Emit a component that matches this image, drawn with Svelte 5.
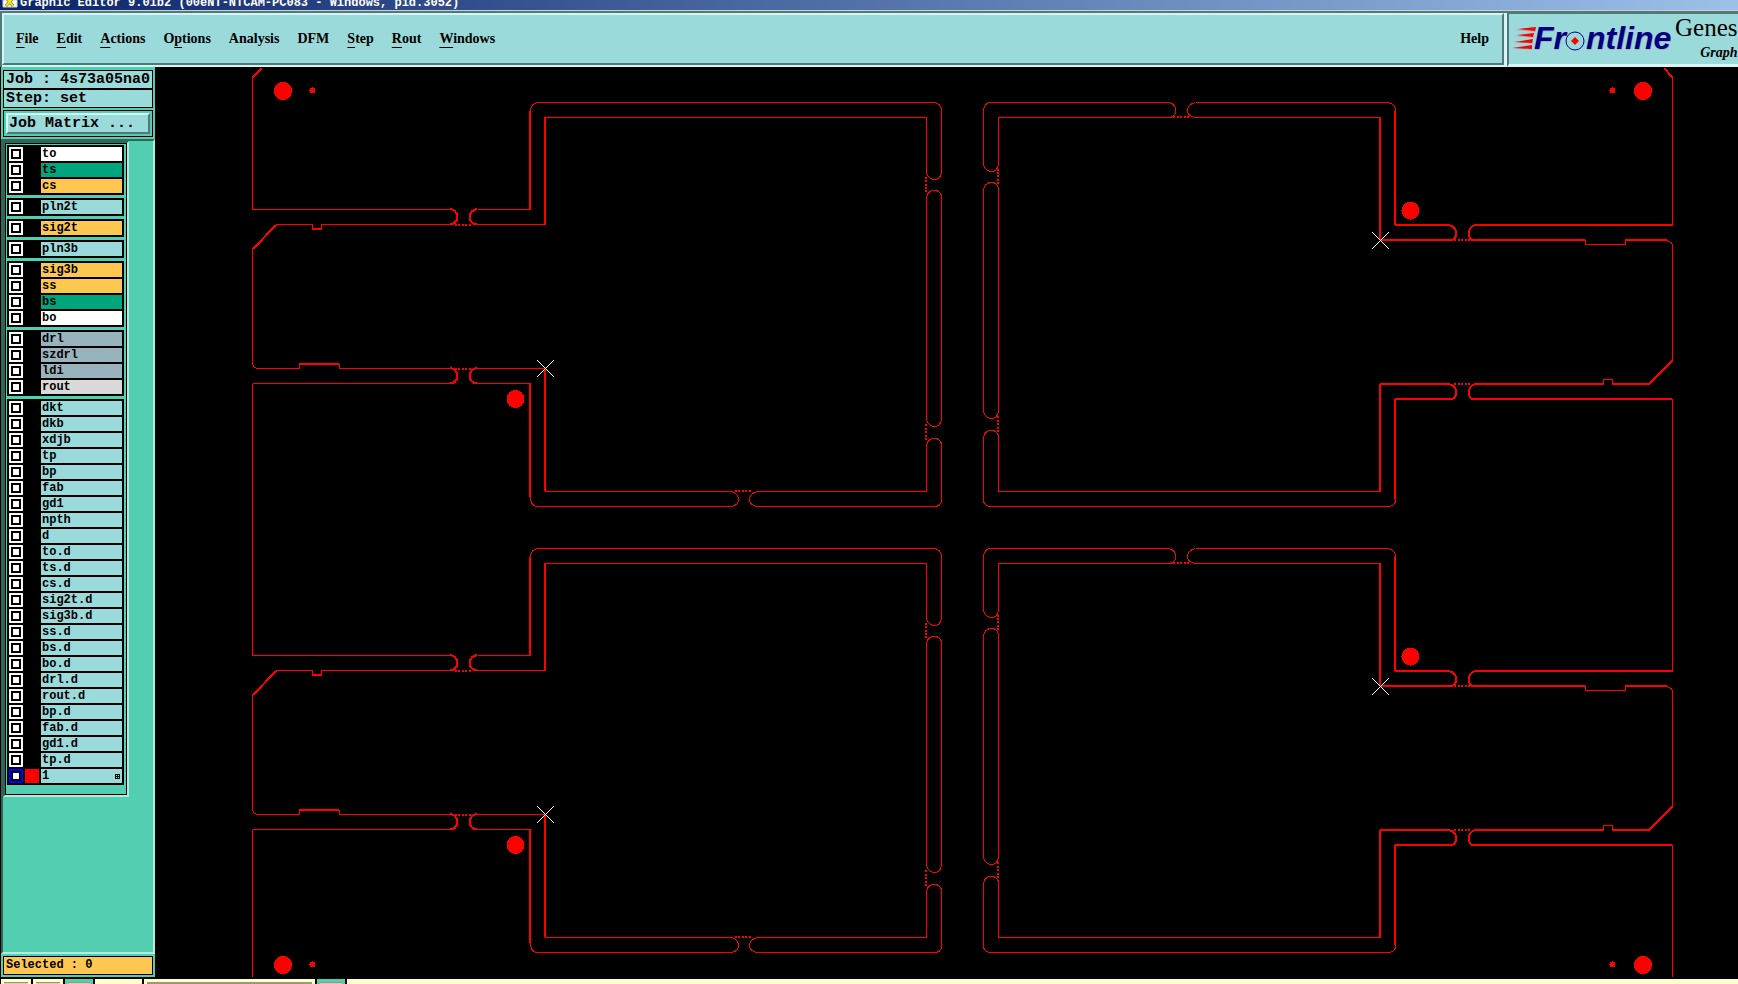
<script lang="ts">
	type Layer = { name: string; tone: string };

	const menus = [
		{ label: 'File', key: 0 },
		{ label: 'Edit', key: 0 },
		{ label: 'Actions', key: 0 },
		{ label: 'Options', key: 1 },
		{ label: 'Analysis', key: -1 },
		{ label: 'DFM', key: -1 },
		{ label: 'Step', key: 0 },
		{ label: 'Rout', key: 0 },
		{ label: 'Windows', key: 0 }
	];

	function layers(tone: string, names: string): Layer[] {
		return names.split(' ').map((name) => ({ name, tone }));
	}

	const groups: Layer[][] = [
		[...layers('white', 'to'), ...layers('green', 'ts'), ...layers('amber', 'cs')],
		layers('aqua', 'pln2t'),
		layers('amber', 'sig2t'),
		layers('aqua', 'pln3b'),
		[...layers('amber', 'sig3b ss'), ...layers('green', 'bs'), ...layers('white', 'bo')],
		[...layers('slate', 'drl szdrl ldi'), ...layers('grey', 'rout')],
		layers(
			'aqua',
			'dkt dkb xdjb tp bp fab gd1 npth d to.d ts.d cs.d sig2t.d sig3b.d ss.d bs.d bo.d drl.d rout.d bp.d fab.d gd1.d tp.d 1'
		)
	];

	let active = '1';

	// the panel repeats its pair of boards once, this far down
	const repeats = [0, 446];

	const thin = [
		// left board
		'M477 209H530V111Q530 102 539 102H934Q941 103 941 111V172Q940 179 934 179T926 172V117H545V224H477Q469 223 469 217T477 209',
		'M926 197Q927 190 934 190T941 197V419Q940 426 934 426T926 419Z',
		'M926 445Q927 438 934 438T941 445V499Q941 506 934 506H757Q749 505 749 499T757 491H926Z',
		'M731 491H545V368H477Q469 369 469 376T477 383H530V499Q531 506 538 506H731Q738 505 738 499T731 491',
		'M252 209H450Q457 210 457 217T450 224H321V229H312V224H276L252 249V362Q252 368 258 368H299V364H339V368H450Q457 369 457 376T450 383H252',
		// right board
		'M991 102H1168Q1175 103 1175 110T1168 117H998V164Q997 171 991 171T983 164V111Q983 102 991 102',
		'M1195 102H1387Q1395 103 1395 111V225H1449Q1456 227 1456 233T1449 240H1380V117H1195Q1187 116 1187 110T1195 102',
		'M983 190Q984 182 991 182T998 190V411Q997 418 991 418T983 411Z',
		'M983 437Q984 430 991 430T998 437V491H1380V384H1449Q1456 385 1456 392T1449 399H1395V499Q1395 506 1387 506H991Q983 506 983 499Z',
		'M1672 225H1475Q1468 227 1468 233T1475 240H1585V244H1625V240H1666Q1672 241 1672 246V361L1649 384H1612V379H1603V384H1475Q1468 385 1468 392T1475 399H1672'
	];

	const thick = [
		'M530 209V111M545 117V224M545 368V491M530 383V497',
		'M276 225L253 249M299 364H339M312 229H321',
		'M450 209Q457 210 457 217T450 224M477 209Q470 210 470 217T477 224',
		'M450 368Q457 369 457 376T450 383M477 368Q470 369 470 376T477 383',
		'M1395 225H1449M1380 240H1453M1472 240H1585M1625 240H1667M1475 225H1672',
		'M1380 384H1449M1395 399H1452M1475 384H1603M1612 384H1649L1672 361M1472 399H1672',
		'M1380 117V240M1395 111V225M1380 384V491M1395 399V499',
		'M1449 225Q1456 227 1456 233T1452 240M1475 225Q1469 227 1469 233T1472 240',
		'M1449 384Q1456 386 1456 392T1452 399M1475 384Q1469 386 1469 392T1472 399'
	];

	const dots = [
		...[456, 459, 463, 466, 470].flatMap((x) => [[x, 225], [x, 369]]),
		...[736, 739, 743, 746, 750].map((x) => [x, 491]),
		...[178, 181, 185, 188, 191, 425, 429, 432, 436, 439].map((y) => [926, y]),
		...[1174, 1178, 1181, 1185, 1188].map((x) => [x, 117]),
		...[1455, 1459, 1462, 1466, 1469].flatMap((x) => [[x, 240], [x, 384]]),
		...[170, 173, 176, 180, 183, 417, 421, 424, 428, 431].map((y) => [998, y])
	];
</script>

<div class="app">
	<header class="title">
		<svg width="16" height="10" viewBox="0 0 16 10" aria-hidden="true">
			<path fill="#fff" stroke="#d4d0c8" d="M1 0H15V7H1Z" />
			<path stroke="#6b6b20" stroke-width="3" d="M4 -3L11 6M12 -3L4 6" />
			<path stroke="#f5e51b" stroke-width="2" d="M4 -3L11 6M12 -3L4 6" />
		</svg>
		<span>Graphic Editor 9.01b2 (00eNT-NTCAM-PC083 - Windows, pid.3052)</span>
	</header>

	<div class="top">
		<nav>
			{#each menus as { label, key }}
				<button>
					{#if key < 0}{label}{:else}{label.slice(0, key)}<u>{label[key]}</u>{label.slice(key + 1)}{/if}
				</button>
			{/each}
			<button class="help">Help</button>
		</nav>
		<div class="brand">
			<svg width="166" height="50" viewBox="1509 14 166 50" role="img" aria-label="Frontline">
				<g class="word halo">
					<text x="1535" y="50">Fr</text>
					<text x="1587" y="50">ntline</text>
				</g>
				<g class="word">
					<text x="1534" y="49">Fr</text>
					<text x="1586" y="49">ntline</text>
				</g>
				<path
					class="halo"
					d="M1514 30L1536 27V32ZM1513 36L1534 33V38ZM1512 42L1533 39V44ZM1511 48L1532 45V50Z"
				/>
				<path
					fill="red"
					d="M1518 29L1536 27L1535 31ZM1517 35L1534 33L1533 37ZM1515 42L1533 39L1532 43ZM1513 48L1532 45V49Z"
				/>
				<circle cx="1575" cy="41" r="9" fill="#9bdada" stroke="#000084" stroke-width="1" />
				<path fill="red" d="M1575 37L1579 41L1575 45L1571 41Z" />
			</svg>
			<div class="product">
				<strong>Genes</strong>
				<em>Graph</em>
			</div>
		</div>
	</div>

	<main>
		<aside>
			<div class="info">
				<div>Job : 4s73a05na0</div>
				<div>Step: set</div>
			</div>
			<div class="matrix"><button>Job Matrix ...</button></div>

			<div class="panel">
				<div class="list">
					<div class="list-inner">
						{#each groups as group}
							<div class="group">
								{#each group as { name, tone }}
									<div class="layer" class:active={name === active}>
										<input type="checkbox" id="layer-{name}" />
										<span class="swatch"></span>
										<label class={tone} for="layer-{name}">
											{name}
											{#if name === active}
												<svg width="5" height="5" viewBox="0 0 5 5" aria-hidden="true">
													<path d="M0 0H5V5H0ZM1 1V2H2V1ZM3 1V2H4V1ZM1 3V4H2V3ZM3 3V4H4V3Z" fill-rule="evenodd" />
												</svg>
											{/if}
										</label>
									</div>
								{/each}
							</div>
						{/each}
					</div>
				</div>
			</div>

			<div class="selected"><div>Selected : 0</div></div>
		</aside>

		<svg class="canvas" viewBox="155 67 1583 910" preserveAspectRatio="xMinYMin meet" role="img" aria-label="Panel outline">
			<g transform="translate(0.5 0.5)" fill="none" stroke="red">
				<path d="M261 68L252 77V209M252 383V655M252 829V977" />
				<path d="M1664 68L1672 77V225M1672 399V671M1672 845V977" />
				<path d="M261 68L252 77M1664 68L1672 77" stroke-width="2" />
			</g>
			<g fill="red">
				{#each [91, 965] as y}
					<circle cx="283" cy={y} r="9" />
					<circle cx="1643" cy={y} r="9" />
					<path d="M310 {y - 3}H312V{y - 4}H313V{y - 3}H315V{y + 2}H310V{y}H309V{y - 1}H310Z" />
					<path d="M1610 {y - 3}H1612V{y - 4}H1613V{y - 3}H1615V{y + 2}H1610V{y}H1609V{y - 1}H1610Z" />
				{/each}
			</g>
			{#each repeats as dy}
				<g transform="translate(0 {dy})">
					<g transform="translate(0.5 0.5)" fill="none" stroke="red">
						{#each thin as d}<path {d} />{/each}
					</g>
					<g fill="none" stroke="red" stroke-width="2">
						{#each thick as d}<path {d} />{/each}
					</g>
					<g fill="red">
						{#each dots as [x, y]}
							<rect x={x - 1} y={y - 1} width="2" height="2" />
						{/each}
						<circle cx="515.5" cy="399" r="9" />
						<circle cx="1410.5" cy="210.5" r="9" />
					</g>
					<path
						stroke="#fff"
						d="M537 360L554 377M554 360L537 377M1372 232L1389 249M1389 232L1372 249"
					/>
				</g>
			{/each}
		</svg>
	</main>

	<footer>
		<span class="cell"></span>
		<span class="cell"></span>
		<span class="cell teal"></span>
		<span class="gap"></span>
		<span class="cell field"></span>
		<span class="cell teal"></span>
		<span class="fill"></span>
	</footer>
</div>

<style>
	:global(body) {
		margin: 0;
		background: #000;
	}

	.app {
		display: flex;
		flex-direction: column;
		min-height: 100vh;
		color: #000;
	}

	.app * {
		box-sizing: border-box;
	}

	button {
		margin: 0;
		padding: 0;
		border: 0;
		background: none;
		color: inherit;
		font: inherit;
	}

	.title {
		display: flex;
		align-items: flex-end;
		gap: 2px;
		height: 11px;
		padding-left: 2px;
		overflow: hidden;
		border-bottom: 1px solid #d4d0c8;
		background: linear-gradient(to right, #0a246a, #9dc0e8);
		color: #fff;
		font: bold 12px/14px 'Liberation Mono', monospace;
		white-space: nowrap;
	}

	.top {
		display: flex;
		height: 56px;
		border-top: 2px solid #4f7a7c;
		border-left: 2px solid #4f7a7c;
		background: #d6f4f4;
	}

	nav {
		flex: 1;
		display: flex;
		align-items: center;
		gap: 18px;
		margin: 0 3px 2px 0;
		padding: 0 13px 0 12px;
		border: 2px solid;
		border-color: #d6f4f4 #4f7a7c #4f7a7c #d6f4f4;
		background: #9bdada;
		font: bold 14px/20px 'Liberation Serif', serif;
	}

	nav u {
		text-decoration-thickness: 1px;
		text-underline-offset: 4px;
		text-decoration-skip-ink: none;
	}

	.help {
		margin-left: auto;
	}

	.brand {
		display: flex;
		width: 231px;
		border-top: 1px solid #4f7a7c;
		border-left: 2px solid #4f7a7c;
		border-bottom: 3px solid #d6f4f4;
		background: #9bdada;
	}

	.brand svg {
		flex: none;
	}

	.word {
		font: italic bold 32px 'Liberation Sans', sans-serif;
		fill: #000084;
	}

	.halo {
		fill: #b5b0b8;
	}

	.product {
		display: flex;
		flex-direction: column;
		align-items: flex-end;
		font-family: 'Liberation Serif', serif;
		white-space: nowrap;
	}

	.product strong {
		font-size: 25px;
		font-weight: normal;
		line-height: 28px;
	}

	.product em {
		font-size: 14px;
		font-weight: bold;
		line-height: 22px;
	}

	main {
		flex: 1;
		display: flex;
	}

	aside {
		flex: none;
		display: flex;
		flex-direction: column;
		width: 155px;
		border-left: 1px solid #000;
		background: #54ceb0;
		font: bold 15px/17px 'Liberation Mono', monospace;
		white-space: nowrap;
	}

	.info {
		padding: 3px 2px 2px;
	}

	.info div {
		height: 19px;
		padding-left: 2px;
		border: 1px solid #000;
		background: #9bdada;
	}

	.matrix {
		margin: 0 2px 2px;
		padding: 2px;
		border: 1px solid #000;
	}

	.matrix button {
		display: block;
		width: 100%;
		height: 21px;
		padding-left: 1px;
		border: 2px solid;
		border-color: #d6f4f4 #4f7a7c #4f7a7c #d6f4f4;
		background: #9bdada;
		text-align: left;
	}

	.panel {
		flex: 1;
		border: 2px solid;
		border-color: #2b6858 #aeeedd #aeeedd #2b6858;
	}

	.list {
		width: 126px;
		border: 2px solid;
		border-color: #2b6858 #aeeedd #aeeedd #2b6858;
	}

	.list-inner {
		display: flex;
		flex-direction: column;
		gap: 3px;
		padding: 1px 2px 9px 1px;
		border: 1px solid #000;
	}

	.group {
		display: flex;
		flex-direction: column;
		gap: 2px;
		padding: 2px;
		background: #000;
	}

	.layer {
		display: flex;
		gap: 2px;
		height: 14px;
		font-size: 12px;
		line-height: 13px;
	}

	.layer input {
		appearance: none;
		width: 14px;
		height: 14px;
		margin: 0;
		background: #fff;
		box-shadow:
			inset 0 0 0 2px #fff,
			inset 0 0 0 4px #000;
	}

	.swatch {
		width: 14px;
	}

	.active input {
		box-shadow:
			inset 0 0 0 2px #00f,
			inset 0 0 0 4px #000;
	}

	.active .swatch {
		background: red;
	}

	.layer label {
		flex: 1;
		display: flex;
		justify-content: space-between;
		align-items: center;
		padding: 0 2px 0 1px;
	}

	.white {
		background: #fff;
	}

	.green {
		background: #00a57c;
	}

	.amber {
		background: #fec74f;
	}

	.aqua {
		background: #9bdada;
	}

	.slate {
		background: #99b3bd;
	}

	.grey {
		background: #d9d9d9;
	}

	.selected {
		padding: 2px;
	}

	.selected div {
		height: 19px;
		padding-left: 2px;
		border: 1px solid #000;
		background: #fec74f;
		font-size: 12px;
	}

	.canvas {
		flex: 1;
		min-width: 0;
		background: #000;
		shape-rendering: crispEdges;
	}

	footer {
		display: flex;
		gap: 2px;
		height: 7px;
		padding: 2px 0 0 1px;
		background: #000;
	}

	.cell {
		width: 30px;
		border: solid #ffffce;
		border-width: 3px 3px 0;
		background: #d0d0b0;
		box-shadow: inset 0 1px #99997a;
	}

	.cell.teal {
		width: 28px;
		border-color: #54ceb0;
	}

	.gap {
		width: 47px;
		background: #ffffce;
	}

	.cell.field {
		width: 171px;
		background: #99997a;
	}

	.fill {
		flex: 1;
		background: #ffffce;
	}
</style>
